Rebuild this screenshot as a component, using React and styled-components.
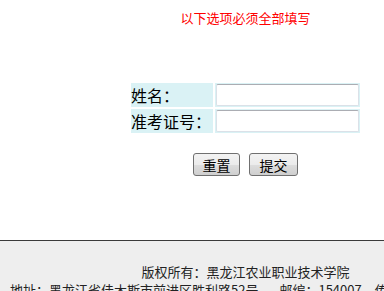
import React from 'react';
import styled, { createGlobalStyle } from 'styled-components';

const GlobalStyle = createGlobalStyle`
  html, body {
    margin: 0;
    padding: 0;
    background: #fff;
    overflow: hidden;
  }
  body {
    font-family: "Noto Sans CJK SC", "Liberation Sans", sans-serif;
  }
`;

const Page = styled.div`
  width: 491px;
`;

const Notice = styled.div`
  padding-top: 10px;
  height: 83px;
  box-sizing: border-box;
  text-align: center;
  font-size: 13px;
  line-height: 16px;
  color: #ff0000;
`;

const FormTable = styled.table`
  margin: 0 auto;
  border-collapse: separate;
  border-spacing: 2px;
  margin-top: -2px;
`;

const LabelCell = styled.td`
  width: 82px;
  height: 24px;
  padding: 0;
  background: #daf2f5;
  font-size: 16px;
  line-height: 20px;
  color: #000;
  white-space: nowrap;
`;

const FieldCell = styled.td`
  padding: 1px;
  background: #daf2f5;
`;

const TextInput = styled.input`
  display: block;
  width: 143px;
  height: 22px;
  box-sizing: border-box;
  margin: 0;
  padding: 1px 3px;
  border: 1px solid #dbe1e8;
  border-top-color: #abadb3;
  border-radius: 2px;
  background: #fff;
  font-size: 14px;
  font-family: inherit;
`;

const Actions = styled.div`
  display: flex;
  justify-content: center;
  gap: 9px;
  margin-top: 18px;
  height: 23px;
`;

const Button = styled.button`
  width: ${(p) => p.$w}px;
  height: 23px;
  padding: 0;
  margin: 0;
  border: 1px solid #707070;
  border-radius: 3px;
  background: linear-gradient(#f3f3f3 0%, #ebebeb 50%, #dddddd 51%, #cfcfcf 100%);
  font-family: inherit;
  font-size: 14px;
  line-height: 20px;
  color: #000;
`;

const Footer = styled.div`
  margin-top: 64px;
  border-top: 1px solid #3a3a3a;
  background: #eeeeee;
  padding-top: 22px;
  height: 60px;
  font-size: 13px;
  line-height: 18px;
  color: #222;
  white-space: nowrap;
`;

const FooterLine = styled.div`
  text-align: ${(p) => (p.$left ? 'left' : 'center')};
  padding-left: ${(p) => (p.$left ? '10px' : '0')};
`;

const Item = styled.span`
  margin-left: ${(p) => p.$gap || 0}px;
`;

export default function App() {
  return (
    <>
      <GlobalStyle />
      <Page>
        <Notice>以下选项必须全部填写</Notice>
        <FormTable>
          <tbody>
            <tr>
              <LabelCell>姓名：</LabelCell>
              <FieldCell>
                <TextInput type="text" />
              </FieldCell>
            </tr>
            <tr>
              <LabelCell>准考证号：</LabelCell>
              <FieldCell>
                <TextInput type="text" />
              </FieldCell>
            </tr>
          </tbody>
        </FormTable>
        <Actions>
          <Button $w={47}>重置</Button>
          <Button $w={49}>提交</Button>
        </Actions>
        <Footer>
          <FooterLine>版权所有：黑龙江农业职业技术学院</FooterLine>
          <FooterLine $left>
            <Item>地址：黑龙江省佳木斯市前进区胜利路52号</Item>
            <Item $gap={21}>邮编：154007</Item>
            <Item $gap={13}>传真</Item>
          </FooterLine>
        </Footer>
      </Page>
    </>
  );
}
